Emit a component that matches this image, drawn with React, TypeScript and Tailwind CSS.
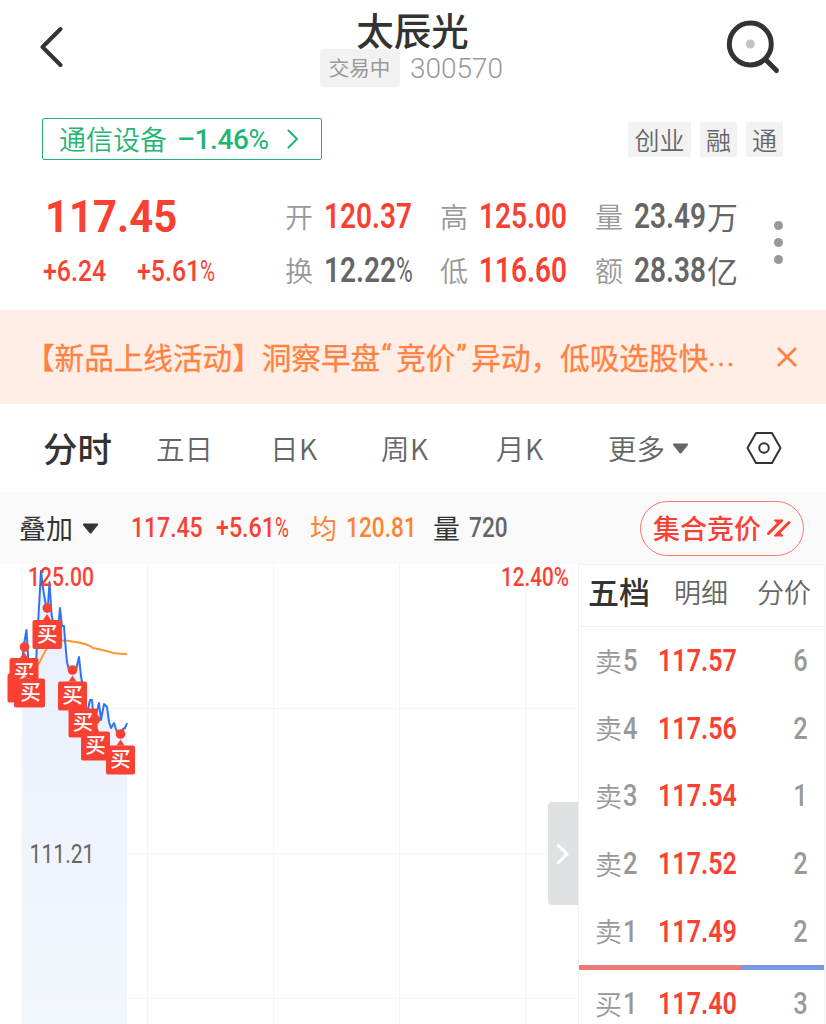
import { clsx } from 'clsx';

interface NumProps {
  children: string;
  className?: string;
}

// condensed tabular digits, the percent sign is drawn narrower and lighter
function Num({ children, className }: NumProps) {
  const percent = children.endsWith('%');
  return (
    <span className={clsx("inline-block origin-left whitespace-nowrap font-['Roboto','Noto_Sans_CJK_SC',sans-serif]", className)}>
      {percent ? children.slice(0, -1) : children}
      {percent && <span className="inline-block origin-left scale-x-[0.82] font-normal">%</span>}
    </span>
  );
}

const stats = [
  { label: '开', value: '120.37', unit: '', up: true },
  { label: '高', value: '125.00', unit: '', up: true },
  { label: '量', value: '23.49', unit: '万', up: false },
  { label: '换', value: '12.22%', unit: '', up: false },
  { label: '低', value: '116.60', unit: '', up: true },
  { label: '额', value: '28.38', unit: '亿', up: false },
];

const asks = [
  { name: '卖', level: '5', price: '117.57', qty: '6' },
  { name: '卖', level: '4', price: '117.56', qty: '2' },
  { name: '卖', level: '3', price: '117.54', qty: '1' },
  { name: '卖', level: '2', price: '117.52', qty: '2' },
  { name: '卖', level: '1', price: '117.49', qty: '2' },
];

const bids = [{ name: '买', level: '1', price: '117.40', qty: '3' }];

const buys = [
  { x: 9.5, y: 94, w: 29 },
  { x: 14, y: 114.5, w: 31 },
  { x: 32.5, y: 56, w: 29.5 },
  { x: 58, y: 117.5, w: 29 },
  { x: 68.5, y: 144.5, w: 29 },
  { x: 81, y: 167.5, w: 29 },
  { x: 106, y: 181.5, w: 29 },
];

const dots = [
  { x: 24.5, y: 83 },
  { x: 47.3, y: 44 },
  { x: 72.5, y: 106 },
  { x: 95.5, y: 155.5 },
  { x: 120.5, y: 170 },
];

const PRICE_LINE =
  '22,100 24,80 26.5,66 29,108 33,104 36,100 38,60 41,7 43,24 46,42 47.5,48 49.5,18 51.5,50 53,58 55,64 58,66 60,44 62,62 64,62 65,76 67,98 69,106 73,108 76,106 79,93 81,112 84,130 87,150 90,136 92,136 94,158 96,151 99,139 101,156 104,140 107,143 109,158 111,164 114,159 117,168 120,172 123,165 125,164 127,159';

function Header() {
  return (
    <header className="flex h-[104px] justify-between pl-[40px] pr-[45px]">
      <svg className="mt-[26px] h-[42px] w-[24px]" viewBox="0 0 24 42" fill="none">
        <path d="M20.5 3 2.5 21l18 18" stroke="#333" strokeWidth="4" strokeLinecap="round" strokeLinejoin="round" />
      </svg>
      <div className="ml-[34px] flex flex-col items-center">
        <h1 className="h-[49px] pl-[2px] pt-[10px] text-[37.5px] font-medium leading-[38px] text-[#333]">太辰光</h1>
        <div className="flex h-[38px] items-center gap-[10px]">
          <span className="flex h-[38px] w-[80px] items-center justify-center rounded bg-[#f2f2f2] pb-px pr-px text-[20.5px] text-[#999]">交易中</span>
          <Num className="pt-px text-[28px] font-[350] text-[#999]">300570</Num>
        </div>
      </div>
      <svg className="mt-[19px] h-[56px] w-[56px]" viewBox="0 0 56 56" fill="none">
        <circle cx="25.3" cy="25" r="21" stroke="#333" strokeWidth="5" />
        <path d="m41 41 10.5 10.5" stroke="#333" strokeWidth="5" strokeLinecap="round" />
        <circle cx="25.3" cy="25" r="4.5" fill="#c4c4c4" />
      </svg>
    </header>
  );
}

function Tags() {
  return (
    <div className="flex h-[70px] items-start justify-between pl-[42px] pr-[43px] pt-[14px]">
      <div className="flex h-[42px] w-[280px] items-center rounded-[2px] border-[1.5px] border-[#22b573] pl-[16px] text-[27px] text-[#22b573]">
        <span className="w-[118px] pb-px font-[350]">通信设备</span>
        <span className="w-[93px] whitespace-nowrap pt-px font-['Roboto',sans-serif] text-[28px]">
          <span className="font-medium tracking-[-0.4px]">–1.46</span>%
        </span>
        <svg className="ml-[17px] h-[20px] w-[12px]" viewBox="0 0 12 20" fill="none">
          <path d="m1.5 1.5 8.5 8.5-8.5 8.5" stroke="#22b573" strokeWidth="2" strokeLinecap="round" />
        </svg>
      </div>
      <div className="mt-[4px] flex gap-[9px] text-[25px] font-[350] leading-[34px] text-[#666]">
        <span className="h-[35px] w-[63px] rounded-[2px] bg-[#f2f2f2] text-center">创业</span>
        <span className="h-[35px] w-[37px] rounded-[2px] bg-[#f2f2f2] text-center">融</span>
        <span className="h-[35px] w-[37px] rounded-[2px] bg-[#f2f2f2] text-center">通</span>
      </div>
    </div>
  );
}

function Quote() {
  return (
    <section className="flex h-[136px]">
      <div className="w-[285px] pl-[43px] pt-[16px] text-[#f94133]">
        <Num className="ml-[2px] h-[54px] scale-x-[0.93] text-[45px] font-bold leading-[54px]">117.45</Num>
        <div className="flex h-[54px] items-center">
          <Num className="w-[94px] scale-x-[0.83] text-[30px] font-medium">+6.24</Num>
          <Num className="scale-x-[0.83] text-[30px] font-medium">+5.61%</Num>
        </div>
      </div>
      <div className="grid h-[123px] w-[460px] grid-cols-[155px_155px_150px] grid-rows-2 pt-[15px]">
        {stats.map((s) => (
          <div key={s.label} className="flex h-[54px] items-center">
            <span className="w-[39px] shrink-0 pb-px text-[28px] font-[350] text-[#999]">{s.label}</span>
            <Num className={clsx('scale-x-[0.8] text-[35px] font-semibold', s.unit ? 'w-[73px]' : 'w-[90px]', s.up ? 'text-[#f94133]' : 'text-[#666]')}>
              {s.value}
            </Num>
            {s.unit && <span className="shrink-0 pb-[2px] text-[31px] text-[#666]">{s.unit}</span>}
          </div>
        ))}
      </div>
      <div className="ml-[29px] flex flex-col gap-[8px] pt-[47px]">
        <i className="size-[9px] rounded-full bg-[#999]" />
        <i className="size-[9px] rounded-full bg-[#999]" />
        <i className="size-[9px] rounded-full bg-[#999]" />
      </div>
    </section>
  );
}

function Notice() {
  return (
    <div className="flex h-[94px] items-center bg-[#ffeee5] pl-[25px] pr-[28px] text-[29.6px] text-[#ff8243] [-webkit-text-stroke:0.3px_#ff8243]">
      <p className="flex w-[752px] whitespace-nowrap">
        <span>【新品上线活动】洞察早盘</span>
        <Num className="w-[16px] pl-[1px]">“</Num>
        <span>竞价</span>
        <Num className="w-[16px] pl-[1px]">”</Num>
        <span>异动，低吸选股快</span>
        <Num className="tracking-[1.5px]">...</Num>
      </p>
      <svg className="size-[20px]" viewBox="0 0 20 20" fill="none">
        <path d="m1 1 18 18M19 1 1 19" stroke="#ff8243" strokeWidth="2.8" />
      </svg>
    </div>
  );
}

function Tabs() {
  return (
    <nav className="flex h-[88px] items-center pl-[43px] text-[28.5px] font-[350] text-[#666]">
      <span className="w-[113px] pb-[2px] text-[34.5px] font-medium text-[#333]">分时</span>
      <span className="w-[114px]">五日</span>
      <span className="w-[111px] tracking-[0.5px]">日K</span>
      <span className="w-[115px] tracking-[0.5px]">周K</span>
      <span className="w-[112px] tracking-[0.5px]">月K</span>
      <span className="w-[64px]">更多</span>
      <svg className="h-[11px] w-[17px]" viewBox="0 0 17 11">
        <path d="M1.5.5h14q1 .5.5 1.5l-6.5 8q-1 1-2 0l-6.5-8q-.5-1 .5-1.5z" fill="#666" />
      </svg>
      <svg className="ml-[57px] h-[34px] w-[36px]" viewBox="0 0 36 34" fill="none" stroke="#333" strokeWidth="2">
        <path d="M10 2h16l8.500 15L26 32H10L1.500 17z" strokeLinejoin="round" />
        <circle cx="18" cy="17" r="4.800" />
      </svg>
    </nav>
  );
}

function Toolbar() {
  return (
    <div className="flex h-[72px] items-center bg-[#fafafa] pl-[19px] text-[27px] text-[#333]">
      <span className="w-[63px] pb-[2px]">叠加</span>
      <svg className="h-[11px] w-[17px]" viewBox="0 0 17 11">
        <path d="M1.5.5h14q1 .5.5 1.5l-6.5 8q-1 1-2 0l-6.5-8q-.5-1 .5-1.5z" fill="#333" />
      </svg>
      <Num className="ml-[32px] w-[85px] scale-x-[0.82] text-[28px] font-medium text-[#f94133]">117.45</Num>
      <Num className="w-[94px] scale-x-[0.83] text-[28px] font-medium text-[#f94133]">+5.61%</Num>
      <span className="w-[36px] pb-[2px] text-[#ff8432]">均</span>
      <Num className="w-[87px] scale-x-[0.81] text-[28px] font-medium text-[#ff8432]">120.81</Num>
      <span className="w-[36px] pb-[2px]">量</span>
      <Num className="w-[171px] scale-x-[0.81] text-[28px] font-medium text-[#666]">720</Num>
      <button className="flex h-[55px] w-[164px] items-center rounded-full border border-[#f94133]/70 pl-[12px] text-[27px] font-medium text-[#f94133]">
        <span className="pb-[2px]">集合竞价</span>
        <svg className="ml-[6px] h-[20px] w-[24px]" viewBox="0 0 24 20" fill="none" stroke="#f94133" strokeLinecap="round">
          <path d="M1.500 15.500 13 4M22 4.500 10.500 16" strokeWidth="3" />
          <path d="M7.500 2h8.500L14.500 4.500h-4.500zM7.500 18H16l-2-2.500H9.500z" fill="#f94133" strokeWidth="1" strokeLinejoin="round" />
        </svg>
      </button>
    </div>
  );
}

function Chart() {
  return (
    <div className="relative h-[460px] w-[578px]">
      <svg className="block overflow-visible" width="578" height="460" viewBox="0 0 578 460" fill="none" fontFamily="Roboto, sans-serif">
        <defs>
          <linearGradient id="area" x1="0" y1="0" x2="0" y2="1">
            <stop offset="0" stopColor="#e9f0fc" />
            <stop offset="1" stopColor="#f3f6fd" />
          </linearGradient>
        </defs>
        <polygon points={`${PRICE_LINE} 127,460 22,460`} fill="url(#area)" />
        <path d="M22 0v460M147.5 0v460M273.5 0v460M399.5 0v460M525.5 0v460M22 144.5h556M22 289.5h556M22 434.5h556" stroke="#f5f5f7" />
        <path d="M25 97c3 5 7 8 11 6 4-3 6-12 12-20 7-7 16-8 27-5 8 1 13 2 18 6 8 2 15 3 20 5 6 1 9 1 14 1" stroke="#ff962e" strokeWidth="2" />
        <polyline points={PRICE_LINE} stroke="#3072f0" strokeWidth="2" strokeLinejoin="round" />
        {dots.map((d) => (
          <circle key={d.x} cx={d.x} cy={d.y} r="4.8" fill="#f94133" />
        ))}
        <rect x="7.5" y="109.5" width="29" height="29" rx="2" fill="#f94133" />
        {buys.map((b) => (
          <g key={b.x}>
            <path d={`M${b.x + 10.5} ${b.y}l4-6 4 6z`} fill="#f94133" />
            <rect x={b.x} y={b.y} width={b.w} height="29" rx="2" fill="#f94133" />
            <text
              x={b.x + b.w / 2 + (b.w > 30 ? 1 : 0)}
              y={b.y + 21.5}
              fontSize="20.5"
              fontWeight="500"
              fill="#fff"
              textAnchor="middle"
              fontFamily="Noto Sans CJK SC, sans-serif"
            >
              买
            </text>
          </g>
        ))}
        <text x="28" y="22" fontSize="26" fontWeight="500" fill="#f94133" textLength="66" lengthAdjust="spacingAndGlyphs">125.00</text>
        <text x="501" y="22" fontSize="26" fontWeight="500" fill="#f94133" textLength="68" lengthAdjust="spacingAndGlyphs">12.40%</text>
        <text x="29.5" y="299" fontSize="26" fontWeight="450" fill="#666" textLength="65" lengthAdjust="spacingAndGlyphs">111.21</text>
      </svg>
      <button className="absolute right-0 top-[238px] flex h-[103px] w-[30px] items-center justify-center rounded-l bg-[#dfe1e4]">
        <svg className="h-[20px] w-[12px]" viewBox="0 0 12 20" fill="none">
          <path d="m1.5 1.5 8.5 8.5-8.5 8.5" stroke="#fff" strokeWidth="3" strokeLinecap="round" />
        </svg>
      </button>
    </div>
  );
}

function Row({ name, level, price, qty }: (typeof asks)[number]) {
  return (
    <div className="flex h-[67.6px] items-center pl-[16px] pr-[16px]">
      <span className="w-[28px] pb-px text-[27px] font-[350] text-[#999]">{name}</span>
      <Num className="w-[35px] scale-x-[0.82] text-[31px] font-medium text-[#999]">{level}</Num>
      <Num className="w-[90px] scale-x-[0.81] text-[31px] font-semibold text-[#f94133]">{price}</Num>
      <Num className="ml-auto origin-right scale-x-[0.82] text-[31px] font-medium text-[#999]">{qty}</Num>
    </div>
  );
}

function OrderBook() {
  return (
    <aside className="h-[460px] w-[247px] border-x border-t border-[#f1f1f3]">
      <div className="flex h-[62px] items-center border-b border-[#f1f1f3] pb-[9px] pl-[9px] text-[27px] font-[350] text-[#666]">
        <span className="w-[86px] pb-px text-[31px] font-medium text-[#333]">五档</span>
        <span className="w-[83px]">明细</span>
        <span className="whitespace-nowrap">分价</span>
      </div>
      {asks.map((row) => (
        <Row key={row.level} {...row} />
      ))}
      <div className="flex h-[5px]">
        <div className="w-[162px] bg-[#ec7a73]" />
        <div className="flex-1 bg-[#7797e8]" />
      </div>
      {bids.map((row) => (
        <Row key={row.level} {...row} />
      ))}
    </aside>
  );
}

export default function App() {
  return (
    <main className="h-[1024px] w-[826px] overflow-hidden bg-white font-['Noto_Sans_CJK_SC',sans-serif] leading-none">
      <Header />
      <Tags />
      <Quote />
      <Notice />
      <Tabs />
      <Toolbar />
      <div className="flex">
        <Chart />
        <OrderBook />
      </div>
    </main>
  );
}
